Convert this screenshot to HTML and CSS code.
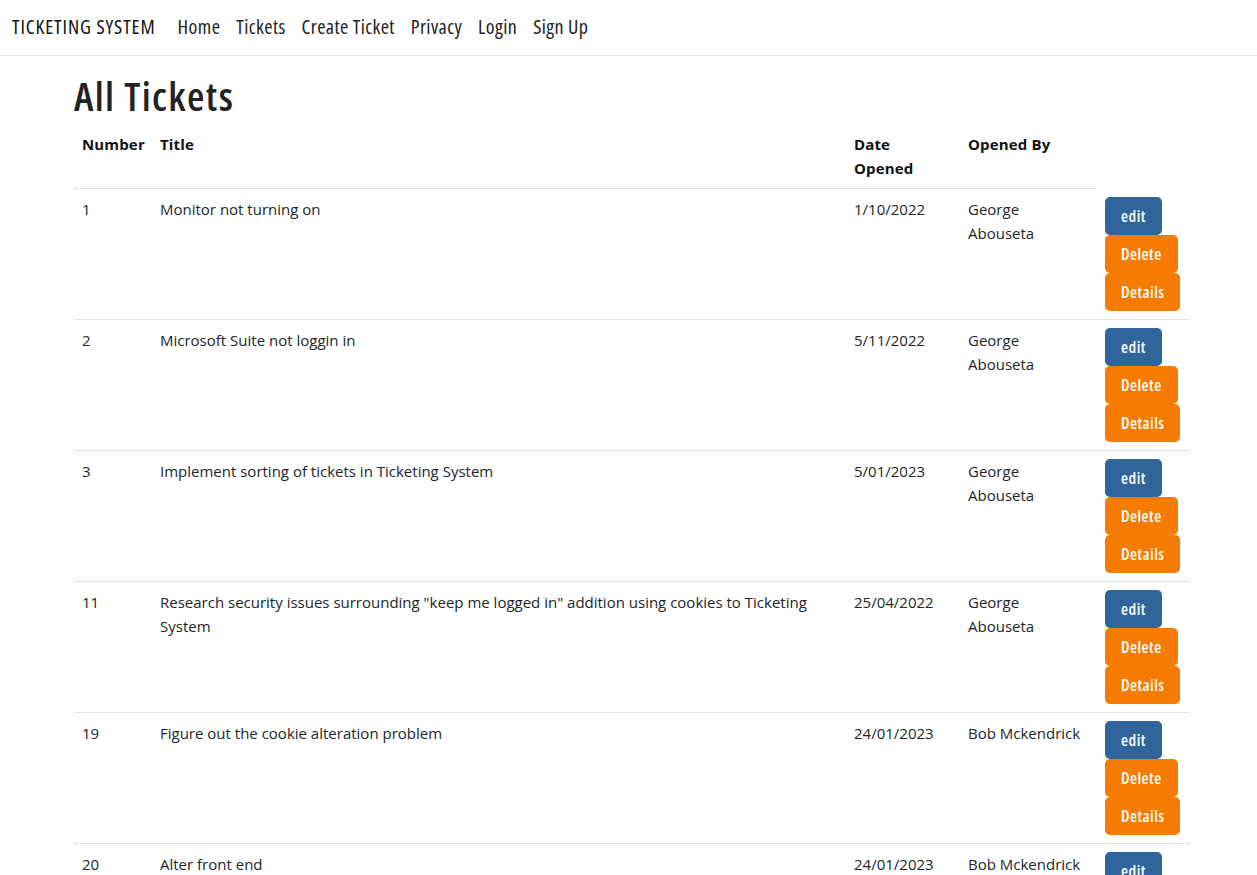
FILE: index.html
```html
<!DOCTYPE html>
<html lang="en">
<head>
<meta charset="utf-8">
<title>All Tickets - Ticketing System</title>
<link rel="stylesheet" href="styles.css">
</head>
<body>
<header class="navbar">
  <a class="brand" href="#">TICKETING SYSTEM</a>
  <nav class="nav">
    <a href="#">Home</a>
    <a href="#">Tickets</a>
    <a href="#">Create Ticket</a>
    <a href="#">Privacy</a>
    <a href="#">Login</a>
    <a href="#">Sign Up</a>
  </nav>
</header>
<main class="container">
  <h1 class="title">All Tickets</h1>
  <table class="tickets">
    <colgroup>
      <col class="c-num"><col class="c-title"><col class="c-date"><col class="c-by"><col class="c-act">
    </colgroup>
    <thead>
      <tr><th>Number</th><th>Title</th><th>Date Opened</th><th>Opened By</th></tr>
    </thead>
    <tbody>
      <tr><td>1</td><td>Monitor not turning on</td><td>1/10/2022</td><td>George Abouseta</td>
        <td><div class="actions"><a class="btn btn-edit" href="#">edit</a><a class="btn btn-orange" href="#">Delete</a><a class="btn btn-orange" href="#">Details</a></div></td></tr>
      <tr><td>2</td><td>Microsoft Suite not loggin in</td><td>5/11/2022</td><td>George Abouseta</td>
        <td><div class="actions"><a class="btn btn-edit" href="#">edit</a><a class="btn btn-orange" href="#">Delete</a><a class="btn btn-orange" href="#">Details</a></div></td></tr>
      <tr><td>3</td><td>Implement sorting of tickets in Ticketing System</td><td>5/01/2023</td><td>George Abouseta</td>
        <td><div class="actions"><a class="btn btn-edit" href="#">edit</a><a class="btn btn-orange" href="#">Delete</a><a class="btn btn-orange" href="#">Details</a></div></td></tr>
      <tr><td>11</td><td>Research security issues surrounding "keep me logged in" addition using cookies to Ticketing System</td><td>25/04/2022</td><td>George Abouseta</td>
        <td><div class="actions"><a class="btn btn-edit" href="#">edit</a><a class="btn btn-orange" href="#">Delete</a><a class="btn btn-orange" href="#">Details</a></div></td></tr>
      <tr><td>19</td><td>Figure out the cookie alteration problem</td><td>24/01/2023</td><td>Bob Mckendrick</td>
        <td><div class="actions"><a class="btn btn-edit" href="#">edit</a><a class="btn btn-orange" href="#">Delete</a><a class="btn btn-orange" href="#">Details</a></div></td></tr>
      <tr><td>20</td><td>Alter front end</td><td>24/01/2023</td><td>Bob Mckendrick</td>
        <td><div class="actions"><a class="btn btn-edit" href="#">edit</a><a class="btn btn-orange" href="#">Delete</a><a class="btn btn-orange" href="#">Details</a></div></td></tr>
    </tbody>
  </table>
</main>
</body>
</html>
```

FILE: styles.css
```css
html, body {
  margin: 0;
  padding: 0;
  background: #fff;
}
body {
  font-family: "Open Sans", "Noto Sans", "Liberation Sans", sans-serif;
  font-size: 15px;
  line-height: 24px;
  color: #212529;
}
a { text-decoration: none; }

.navbar {
  display: flex;
  align-items: center;
  height: 53px;
  padding: 0 0 2px 12px;
  border-bottom: 1px solid #e2e2e2;
  font-family: "Open Sans", sans-serif;
  font-stretch: 75%;
}
.brand {
  font-size: 20px;
  letter-spacing: 0.9px;
  color: #111;
  margin-right: 14px;
}
.nav {
  display: flex;
}
.nav a {
  font-size: 20px;
  letter-spacing: 0.4px;
  color: #222;
  padding: 0 8px;
}

.container {
  padding-left: 74px;
}
.title {
  font-family: "Open Sans", sans-serif;
  font-stretch: 75%;
  font-size: 40px;
  font-weight: 600;
  letter-spacing: 1.4px;
  line-height: 48px;
  margin: 16px 0 4px;
  color: #222;
}

.tickets {
  border-collapse: collapse;
  table-layout: fixed;
  width: 1116px;
}
.c-num { width: 78px; }
.c-title { width: 694px; }
.c-date { width: 114px; }
.c-by { width: 137px; }
.c-act { width: 93px; }

.tickets th,
.tickets td {
  padding: 8px;
  text-align: left;
  vertical-align: top;
  border-bottom: 1px solid #dee2e6;
}
.tickets th {
  font-weight: 700;
  color: #111;
  letter-spacing: 0.15px;
}

.actions {
  display: flex;
  flex-direction: column;
  align-items: flex-start;
}
.btn {
  display: block;
  font-family: "Open Sans", sans-serif;
  font-stretch: 75%;
  font-size: 16px;
  font-weight: 600;
  letter-spacing: 0.5px;
  line-height: 24px;
  color: #fff;
  padding: 7px 16px;
  border-radius: 5px;
}
.btn-edit { background: #30659b; }
.btn-orange { background: #f57c00; }
```
